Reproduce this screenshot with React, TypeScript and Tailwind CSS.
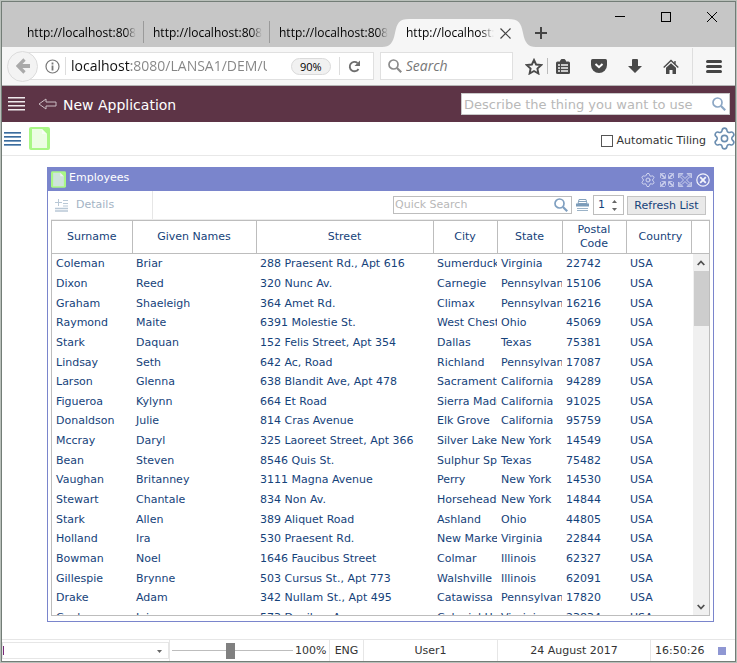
import React, { useState } from "react";
import { Settings } from "lucide-react";

type Employee = [string, string, string, string, string, string];

const employees: Employee[] = [
  ["Coleman", "Briar", "288 Praesent Rd., Apt 616", "Sumerduck", "Virginia", "22742"],
  ["Dixon", "Reed", "320 Nunc Av.", "Carnegie", "Pennsylvania", "15106"],
  ["Graham", "Shaeleigh", "364 Amet Rd.", "Climax", "Pennsylvania", "16216"],
  ["Raymond", "Maite", "6391 Molestie St.", "West Chester", "Ohio", "45069"],
  ["Stark", "Daquan", "152 Felis Street, Apt 354", "Dallas", "Texas", "75381"],
  ["Lindsay", "Seth", "642 Ac, Road", "Richland", "Pennsylvania", "17087"],
  ["Larson", "Glenna", "638 Blandit Ave, Apt 478", "Sacramento", "California", "94289"],
  ["Figueroa", "Kylynn", "664 Et Road", "Sierra Madre", "California", "91025"],
  ["Donaldson", "Julie", "814 Cras Avenue", "Elk Grove", "California", "95759"],
  ["Mccray", "Daryl", "325 Laoreet Street, Apt 366", "Silver Lake", "New York", "14549"],
  ["Bean", "Steven", "8546 Quis St.", "Sulphur Springs", "Texas", "75482"],
  ["Vaughan", "Britanney", "3111 Magna Avenue", "Perry", "New York", "14530"],
  ["Stewart", "Chantale", "834 Non Av.", "Horseheads", "New York", "14844"],
  ["Stark", "Allen", "389 Aliquet Road", "Ashland", "Ohio", "44805"],
  ["Holland", "Ira", "530 Praesent Rd.", "New Market", "Virginia", "22844"],
  ["Bowman", "Noel", "1646 Faucibus Street", "Colmar", "Illinois", "62327"],
  ["Gillespie", "Brynne", "503 Cursus St., Apt 773", "Walshville", "Illinois", "62091"],
  ["Drake", "Adam", "342 Nullam St., Apt 495", "Catawissa", "Pennsylvania", "17820"],
  ["Cooke", "Jaime", "573 Dapibus Av.", "Colonial Heights", "Virginia", "23834"],
];

const columns = [
  { label: "Surname", width: "w-[80px]" },
  { label: "Given Names", width: "w-[124px]" },
  { label: "Street", width: "" },
  { label: "City", width: "w-[64px]" },
  { label: "State", width: "w-[65px]" },
  { label: "Postal Code", width: "w-[64px]" },
  { label: "Country", width: "w-[65px]" },
];

const tabs = [1, 2, 3];

function MenuLines({ color, shade }: { color: string; shade: string }) {
  return (
    <svg width="17" height="14" viewBox="0 0 17 14">
      {[0, 4, 8, 12].map((y) => (
        <g key={y}>
          <rect x="0" y={y} width="17" height="1" fill={color} />
          <rect x="0" y={y + 1} width="17" height="1" fill={shade} />
        </g>
      ))}
    </svg>
  );
}

function Magnifier({ size, color }: { size: number; color: string }) {
  return (
    <svg width={size} height={size} viewBox="0 0 14 14" fill="none" stroke={color}>
      <circle cx="5.5" cy="5.5" r="4.5" strokeWidth="1.7" />
      <path d="M9 9l4.2 4.2" strokeWidth="2.2" />
    </svg>
  );
}

function PageIcon({ size, page }: { size: number; page: string }) {
  return (
    <svg width={size} height={size + 2} viewBox="0 0 21 23">
      <rect width="21" height="23" rx="2" fill="#a9f786" />
      <path d="M3 2h10l5 5v14H3z" fill={page} />
      <path d="M13 2v5h5z" fill="#fff" opacity=".6" />
    </svg>
  );
}

function ArrowsIcon({ inward }: { inward?: boolean }) {
  return (
    <svg width="14" height="14" viewBox="0 0 14 14" fill="none" stroke="#cdd2ee">
      {[0, 90, 180, 270].map((angle) => (
        <g key={angle} transform={`rotate(${angle} 7 7)`}>
          {inward ? (
            <>
              <path d="M.3 .3L5 5" strokeWidth="1.600" />
              <path d="M1.500 5.500h4v-4M2 .5h3M.5 2v3" strokeWidth=".8" />
            </>
          ) : (
            <>
              <path d="M.5 .5h4.500L.5 5z" fill="#a9b1de" strokeWidth=".8" />
              <path d="M2.500 4l3 3M4 2.500l3 3" />
            </>
          )}
        </g>
      ))}
    </svg>
  );
}

function TabStrip() {
  return (
    <div className="flex h-[45px] items-end bg-[#c6c6c6] pl-4">
      {tabs.map((tab) => (
        <button
          key={tab}
          className="relative flex h-7 w-[126px] shrink-0 items-center pl-[9px] text-left text-black"
        >
          <span className="w-[109px] overflow-hidden whitespace-nowrap [mask-image:linear-gradient(to_right,black_90%,transparent)]">
            http://localhost:8080
          </span>
          {tab < 3 && <span className="absolute right-0 bottom-1 h-[22px] w-px bg-[#9a9a9a]" />}
        </button>
      ))}
      <div className="relative flex h-7 w-[131px] shrink-0 items-center pl-[10px] text-black">
        <svg
          className="absolute top-0 -left-3.5"
          width="154"
          height="28"
          viewBox="0 0 154 28"
          fill="#f6f6f6"
        >
          <path d="M0 28C8 28 11 24 13 14C15 4 17 0 27 0H126C137 0 139 4 141 14C143 24 146 28 154 28Z" />
        </svg>
        <button className="relative w-[88px] overflow-hidden text-left whitespace-nowrap [mask-image:linear-gradient(to_right,black_85%,transparent)]">
          http://localhost:8080
        </button>
        <button className="relative ml-1.5" aria-label="Close tab">
          <svg width="11" height="11" viewBox="0 0 11 11" stroke="#444" strokeWidth="1.2">
            <path d="M.5 .5l10 10M10.5 .5l-10 10" />
          </svg>
        </button>
      </div>
      <button className="mb-2 ml-2" aria-label="New tab">
        <svg width="12" height="12" viewBox="0 0 12 12" stroke="#444" strokeWidth="2">
          <path d="M6 0v12M0 6h12" />
        </svg>
      </button>
      <div className="mr-[18px] mb-[25px] ml-auto flex items-center gap-9">
        <button aria-label="Minimize">
          <svg width="10" height="10" viewBox="0 0 10 10" stroke="#000">
            <path d="M0 4.5h10" />
          </svg>
        </button>
        <button aria-label="Maximize">
          <svg width="10" height="10" viewBox="0 0 10 10" stroke="#000" fill="none">
            <rect x=".5" y=".5" width="9" height="9" />
          </svg>
        </button>
        <button aria-label="Close">
          <svg width="10" height="10" viewBox="0 0 10 10" stroke="#000">
            <path d="M0 0l10 10M10 0L0 10" />
          </svg>
        </button>
      </div>
    </div>
  );
}

function BrowserToolbar() {
  const [url, setUrl] = useState("localhost:8080/LANSA1/DEM/UI/index.html");

  return (
    <div className="flex h-[39px] items-center border-b border-[#b5b5b5] bg-[#f6f6f6] pl-[5px]">
      <button
        className="z-10 flex size-[31px] shrink-0 items-center justify-center rounded-full border border-[#dcdcdc] bg-[#f3f3f3]"
        aria-label="Back"
      >
        <svg width="14" height="16" viewBox="0 0 14 16" fill="none" stroke="#a9a9a9">
          <path d="M2 8h12" strokeWidth="4" />
          <path d="M8.5 1.5L2 8l6.500 6.500" strokeWidth="3.200" />
        </svg>
      </button>
      <div className="-ml-3 flex h-7 flex-1 items-center border border-[#e0e0e0] bg-white pl-[18px]">
        <svg width="15" height="15" viewBox="0 0 15 15" fill="none" stroke="#777">
          <circle cx="7.5" cy="7.5" r="6.5" strokeWidth="1.200" />
          <path d="M7.500 6.500v5M7.500 3.500v2" strokeWidth="1.800" />
        </svg>
        <span className="mx-[5px] h-[18px] w-px bg-[#ddd]" />
        <input
          aria-label="Address"
          value={url}
          onChange={(e) => setUrl(e.target.value)}
          className="w-[196px] min-w-0 flex-1 bg-[linear-gradient(to_right,#111_60px,#858585_60px)] bg-clip-text text-sm text-transparent outline-none"
        />
        <span className="ml-6 rounded-full border border-[#dadada] bg-[#f1f1f1] px-2 text-[11px] leading-[15px] text-black">
          90%
        </span>
        <span className="mx-2 h-[18px] w-px bg-[#ddd]" />
        <button className="mr-3" aria-label="Reload">
          <svg width="13" height="13" viewBox="0 0 13 13" fill="none" stroke="#6e6e6e">
            <path d="M10.500 9A4.700 4.700 0 1 1 9.500 3" strokeWidth="1.900" />
            <path d="M12 .5v5.500H6.500z" fill="#6e6e6e" stroke="none" />
          </svg>
        </button>
      </div>
      <label className="ml-1.5 flex h-7 w-[133px] shrink-0 items-center gap-1 border border-[#e0e0e0] bg-white pl-[7px]">
        <Magnifier size={14} color="#8a8a8a" />
        <input
          aria-label="Search"
          placeholder="Search"
          className="w-24 text-sm italic outline-none placeholder:text-[#777]"
        />
      </label>
      <div className="ml-3 flex shrink-0 items-center">
        <button aria-label="Bookmark">
          <svg width="18" height="17" viewBox="0 0 18 17" fill="none" stroke="#4a4a4a">
            <path
              d="M9 2l2.100 4.500 5 .6-3.700 3.400 1 5L9 13l-4.400 2.500 1-5L1.900 7.100l5-.6z"
              strokeWidth="1.900"
            />
          </svg>
        </button>
        <span className="mx-1 h-4 w-px bg-[#bbb]" />
        <button className="ml-1" aria-label="Reading list">
          <svg width="14" height="15" viewBox="0 0 14 15" fill="#4a4a4a">
            <path d="M4 3V1.500L5.500 0h3L10 1.500V3z" />
            <rect y="2.500" width="14" height="12.500" rx="1.500" />
            <path
              d="M2 6h2M5 6h7M2 9h2M5 9h7M2 12h2M5 12h7"
              stroke="#f6f6f6"
              strokeWidth="1.400"
            />
          </svg>
        </button>
        <button className="ml-[21px]" aria-label="Pocket">
          <svg width="16" height="14" viewBox="0 0 16 14">
            <path d="M1.500 0h13Q16 0 16 1.500V6A8 8 0 0 1 0 6V1.500Q0 0 1.500 0z" fill="#4a4a4a" />
            <path d="M4.500 5L8 8.200 11.500 5" fill="none" stroke="#fff" strokeWidth="2" />
          </svg>
        </button>
        <button className="ml-[21px]" aria-label="Downloads">
          <svg width="14" height="14" viewBox="0 0 14 14" fill="#4a4a4a">
            <path d="M4 1Q4 0 5 0H9Q10 0 10 1V7H14L7 14 0 7H4z" />
          </svg>
        </button>
        <button className="ml-[21px]" aria-label="Home">
          <svg width="16" height="15" viewBox="0 0 16 15" fill="#4a4a4a">
            <path d="M8 4.200l5 4.600V15H9.500v-4h-3v4H3V8.800z" />
            <path d="M.7 8.500L8 1.500l7.300 7M12 2v3" fill="none" stroke="#4a4a4a" strokeWidth="1.400" />
          </svg>
        </button>
        <span className="ml-[13px] h-9 w-px bg-[#dedede]" />
        <button className="mr-[15px] ml-[13px]" aria-label="Menu">
          <svg width="16" height="13" viewBox="0 0 16 13" stroke="#444" strokeWidth="3" strokeLinecap="round">
            <path d="M1.500 1.500h13M1.500 6.500h13M1.500 11.500h13" />
          </svg>
        </button>
      </div>
    </div>
  );
}

function AppHeader() {
  return (
    <>
      <header className="flex h-9 items-center bg-[#5d3446] px-[5px]">
        <button className="ml-px" aria-label="Application menu">
          <MenuLines color="#f0eaed" shade="#a58f99" />
        </button>
        <button className="ml-[13px]" aria-label="Go back">
          <svg width="19" height="12" viewBox="0 0 19 12" fill="none" stroke="#cbbcc3">
            <path d="M1 6l7-5v3h10v4H8v3z" />
          </svg>
        </button>
        <h1 className="ml-1.5 pt-0.5 text-sm text-white">New Application</h1>
        <label className="ml-auto flex h-[22px] w-[269px] items-center border border-[#c9c9c9] bg-white pl-0.5">
          <input
            aria-label="Describe the thing you want to use"
            placeholder="Describe the thing you want to use"
            className="min-w-0 flex-1 pt-px text-[13px] outline-none placeholder:text-[#b8b8b8]"
          />
          <span className="mr-[3px]">
            <Magnifier size={14} color="#8ba6c4" />
          </span>
        </label>
      </header>
      <div className="flex h-[34px] items-center border-b border-[#e8e8e8] pl-0.5 text-[#333]">
        <button aria-label="Views">
          <MenuLines color="#3d6c9c" shade="#7b9fc2" />
        </button>
        <button className="ml-2" aria-label="Employees">
          <PageIcon size={21} page="#ecfde3" />
        </button>
        <label className="mt-1 ml-auto flex items-center gap-1">
          <input
            type="checkbox"
            className="size-3 appearance-none border border-[#555] bg-white checked:bg-[#555]"
          />
          <span className="pt-px">Automatic Tiling</span>
        </label>
        <button className="-mr-0.5 ml-1.5" aria-label="Settings">
          <Settings size={25} strokeWidth={1.5} color="#6a8db0" />
        </button>
      </div>
    </>
  );
}

function EmployeeTable() {
  return (
    <div className="relative mx-[3px] mb-[5px] min-h-0 flex-1 overflow-hidden border border-[#bdbdbd]">
      <table className="h-[406px] w-full table-fixed border-collapse">
        <thead>
          <tr className="h-8 border-b border-[#bdbdbd]">
            {columns.map((col) => (
              <th
                key={col.label}
                className={`${col.width} border-r border-[#bdbdbd] px-3 py-0 leading-[14px] font-normal`}
              >
                {col.label}
              </th>
            ))}
            <th className="w-[18px]" aria-label="Scroll" />
          </tr>
        </thead>
        <tbody>
          {employees.map((row, i) => (
            <tr key={i}>
              {[...row, "USA"].map((value, j) => (
                <td
                  key={j}
                  className="overflow-hidden pt-0.5 pr-0 pb-0 pl-1 leading-4 whitespace-nowrap"
                >
                  {value}
                </td>
              ))}
              <td />
            </tr>
          ))}
        </tbody>
      </table>
      {/* scroll bar */}
      <div className="absolute top-[33px] right-0 bottom-0 flex w-4 flex-col items-center bg-[#f0f0f0]">
        <button className="flex h-[17px] items-center" aria-label="Scroll up">
          <svg width="8" height="6" viewBox="0 0 8 6" fill="none" stroke="#505050" strokeWidth="1.800">
            <path d="M.7 5L4 1.500 7.300 5" />
          </svg>
        </button>
        <div className="h-[55px] w-[15px] bg-[#cdcdcd]" />
        <button className="mt-auto flex h-4 items-center" aria-label="Scroll down">
          <svg width="8" height="6" viewBox="0 0 8 6" fill="none" stroke="#505050" strokeWidth="1.800">
            <path d="M.7 1L4 4.500 7.300 1" />
          </svg>
        </button>
      </div>
    </div>
  );
}

function EmployeesPanel() {
  const [count, setCount] = useState(1);

  return (
    <section className="mt-[11px] mr-[21px] mb-[17px] ml-[45px] flex min-h-0 flex-1 flex-col border border-[#7a85cc] text-[#15427a]">
      <div className="flex h-[23px] shrink-0 items-center bg-[#7a85cc] px-[3px] text-white">
        <PageIcon size={15} page="#cfe3dc" />
        <h2 className="mb-0.5 ml-[3px]">Employees</h2>
        <div className="ml-auto flex items-center gap-1">
          <button aria-label="Panel settings">
            <Settings size={16} strokeWidth={1.5} color="#d3d7f0" />
          </button>
          <button aria-label="Restore">
            <ArrowsIcon inward />
          </button>
          <button aria-label="Expand">
            <ArrowsIcon />
          </button>
          <button aria-label="Close panel">
            <svg width="14" height="14" viewBox="0 0 14 14" fill="none" stroke="#f4f5fc">
              <circle cx="7" cy="7" r="6.200" strokeWidth="1.200" />
              <path d="M4.200 4.200l5.600 5.600M9.800 4.200L4.200 9.800" strokeWidth="1.800" />
            </svg>
          </button>
        </div>
      </div>
      <div className="mx-[3px] flex h-[29px] shrink-0 items-center border-b border-[#ececec] pr-1">
        <button className="flex h-full w-[102px] items-center gap-2 border-r border-[#e6e6e6] pl-1 text-[#a3b3c4]">
          <svg width="13" height="13" viewBox="0 0 13 13" stroke="#b9c8d6">
            <path d="M3.500 0v7M0 3.500h7M8 1.500h5M8 4.500h5M8 7h5" />
            <path d="M0 9.500h13M0 12h13" strokeWidth="1.600" />
          </svg>
          <span className="pt-px">Details</span>
        </button>
        <label className="ml-auto flex h-[18px] w-[179px] items-center border border-[#bdbdbd] pl-px">
          <input
            aria-label="Quick Search"
            placeholder="Quick Search"
            className="min-w-0 flex-1 pt-px outline-none placeholder:text-[#b8b8b8]"
          />
          <span className="mr-[3px]">
            <Magnifier size={14} color="#7f9fc0" />
          </span>
        </label>
        <button className="mx-1" aria-label="Print">
          <svg width="13" height="12" viewBox="0 0 13 12">
            <path d="M3 .5h7l1 4H2z" fill="#fff" stroke="#86a3bd" />
            <path d="M3 2.500h7" stroke="#86a3bd" />
            <rect y="4.500" width="13" height="3" fill="#7c9cb9" />
            <path d="M1 9.500h11M1 11.500h11" stroke="#9bb3c8" />
          </svg>
        </button>
        <div className="flex h-5 w-[31px] items-center border border-[#bdbdbd] pl-1">
          <input
            aria-label="Page"
            value={count}
            onChange={(e) => setCount(Number(e.target.value) || 1)}
            className="w-[14px] pt-px outline-none"
          />
          <div className="flex flex-col gap-[5px]">
            <button onClick={() => setCount(count + 1)} aria-label="Next">
              <svg className="block" width="5" height="3" viewBox="0 0 5 3" fill="#666">
                <path d="M0 3L2.500 0 5 3z" />
              </svg>
            </button>
            <button onClick={() => setCount(Math.max(1, count - 1))} aria-label="Previous">
              <svg className="block" width="5" height="3" viewBox="0 0 5 3" fill="#666">
                <path d="M0 0l2.500 3L5 0z" />
              </svg>
            </button>
          </div>
        </div>
        <button className="ml-[3px] h-[19px] w-[79px] border border-[#c4c4c4] bg-[#e9e9e9] pt-px leading-4">
          Refresh List
        </button>
      </div>
      <EmployeeTable />
    </section>
  );
}

function StatusBar() {
  const [zoom, setZoom] = useState(48);

  return (
    <footer className="flex h-[22px] shrink-0 items-stretch border-t border-[#e6e6e6] text-[#333]">
      <div className="relative my-0.5 w-[167px] border border-[#e6e6e6]">
        <span className="absolute top-[3px] left-0 h-[9px] w-px bg-[#7a2a7a]" />
        <select aria-label="Command" className="h-full w-full appearance-none pl-1 outline-none">
          <option></option>
        </select>
        <svg className="absolute top-[7px] right-1.5" width="5" height="3" viewBox="0 0 5 3" fill="#666">
          <path d="M0 0l2.500 3L5 0z" />
        </svg>
      </div>
      <div className="flex w-[161px] items-center border-x border-[#e6e6e6] pl-0.5">
        <input
          type="range"
          aria-label="Zoom"
          value={zoom}
          onChange={(e) => setZoom(Number(e.target.value))}
          className="h-4 w-[121px] appearance-none bg-[linear-gradient(#bdbdbd,#bdbdbd)] bg-[length:100%_1px] bg-center bg-no-repeat [&::-webkit-slider-thumb]:h-4 [&::-webkit-slider-thumb]:w-[9px] [&::-webkit-slider-thumb]:appearance-none [&::-webkit-slider-thumb]:bg-[#808080]"
        />
        <span className="ml-0.5 pt-px">100%</span>
      </div>
      <div className="flex w-[34px] items-center justify-center border-r border-[#e6e6e6] pt-px">
        ENG
      </div>
      <div className="flex flex-1 items-center justify-center border-r border-[#e6e6e6] pt-px">
        User1
      </div>
      <div className="flex w-[153px] items-center justify-center border-r border-[#e6e6e6] pt-px">
        24 August 2017
      </div>
      <div className="flex w-[84px] items-center gap-3.5 pt-px pl-1">
        16:50:26
        <span className="size-2 bg-[#8f97d3]" />
      </div>
    </footer>
  );
}

export default function App() {
  return (
    <div className="h-screen border border-[#b9c0ba] bg-white">
      <div className="flex h-full flex-col border border-[#737d77] font-['DejaVu_Sans',Verdana,sans-serif] text-[11px]">
        <div className="shrink-0 font-['Open_Sans','Noto_Sans',sans-serif] text-xs">
          <TabStrip />
          <BrowserToolbar />
        </div>
        <AppHeader />
        <EmployeesPanel />
        <StatusBar />
      </div>
    </div>
  );
}
